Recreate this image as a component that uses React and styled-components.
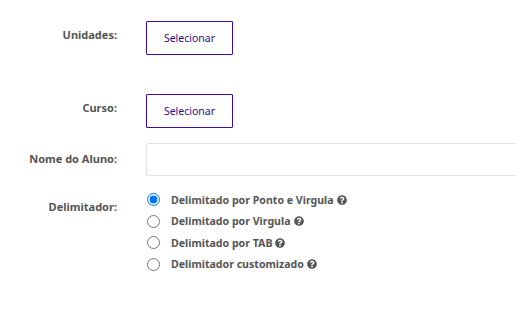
import styled, { createGlobalStyle } from "styled-components";
import { FaQuestionCircle } from "react-icons/fa";

const Global = createGlobalStyle`
    body {
        margin: 0;
        background: #fff;
        font-family: "Noto Sans", "Open Sans", sans-serif;
        overflow: hidden;
    }
`;

const options = [
    "Delimitado por Ponto e Virgula",
    "Delimitado por Virgula",
    "Delimitado por TAB",
    "Delimitador customizado",
];

function App() {
    return (
        <>
            <Global />
            <Form>
                <Row $top={21}>
                    <Label>Unidades:</Label>
                    <SelectButton>Selecionar</SelectButton>
                </Row>
                <Row $top={39}>
                    <Label>Curso:</Label>
                    <SelectButton>Selecionar</SelectButton>
                </Row>
                <Row $top={15}>
                    <Label $pad={6}>Nome do Aluno:</Label>
                    <TextInput type="text" />
                </Row>
                <Row $top={13}>
                    <Label $pad={8}>Delimitador:</Label>
                    <RadioGroup>
                        {options.map((opt, i) => (
                            <RadioItem key={opt}>
                                <input type="radio" name="delim" defaultChecked={i === 0} />
                                <span>{opt}</span>
                                <FaQuestionCircle size={10} color="#555" />
                            </RadioItem>
                        ))}
                    </RadioGroup>
                </Row>
            </Form>
        </>
    );
}

const Form = styled.div`
    display: flex;
    flex-direction: column;
    width: 515px;
`;
const Row = styled.div`
    display: flex;
    align-items: flex-start;
    gap: 29px;
    margin-top: ${(p) => p.$top}px;
`;
const Label = styled.div`
    width: 117px;
    flex-shrink: 0;
    text-align: right;
    font-size: 11px;
    font-weight: 700;
    color: #555;
    line-height: 20px;
    padding-top: ${(p) => (p.$pad ?? 4)}px;
`;
const SelectButton = styled.button`
    width: 87px;
    height: 34px;
    background: #fff;
    border: 1px solid #3c0aa8;
    border-radius: 1px;
    color: #2a0c8a;
    font-family: "Noto Sans", sans-serif;
    font-size: 10.5px;
    padding: 0;
    cursor: pointer;
`;
const TextInput = styled.input`
    flex: 1;
    min-width: 0;
    height: 33px;
    margin-right: -4px;
    box-sizing: border-box;
    border: 1px solid #e2e2e2;
    border-radius: 2px;
    outline: none;
`;
const RadioGroup = styled.div`
    display: flex;
    flex-direction: column;
`;
const RadioItem = styled.label`
    display: flex;
    align-items: center;
    height: 21.5px;
    font-size: 10.6px;
    font-weight: 700;
    color: #555;

    input {
        width: 13px;
        height: 13px;
        margin: 0 11px 0 1px;
    }
    svg {
        margin-left: 3px;
    }
`;

export default App;
